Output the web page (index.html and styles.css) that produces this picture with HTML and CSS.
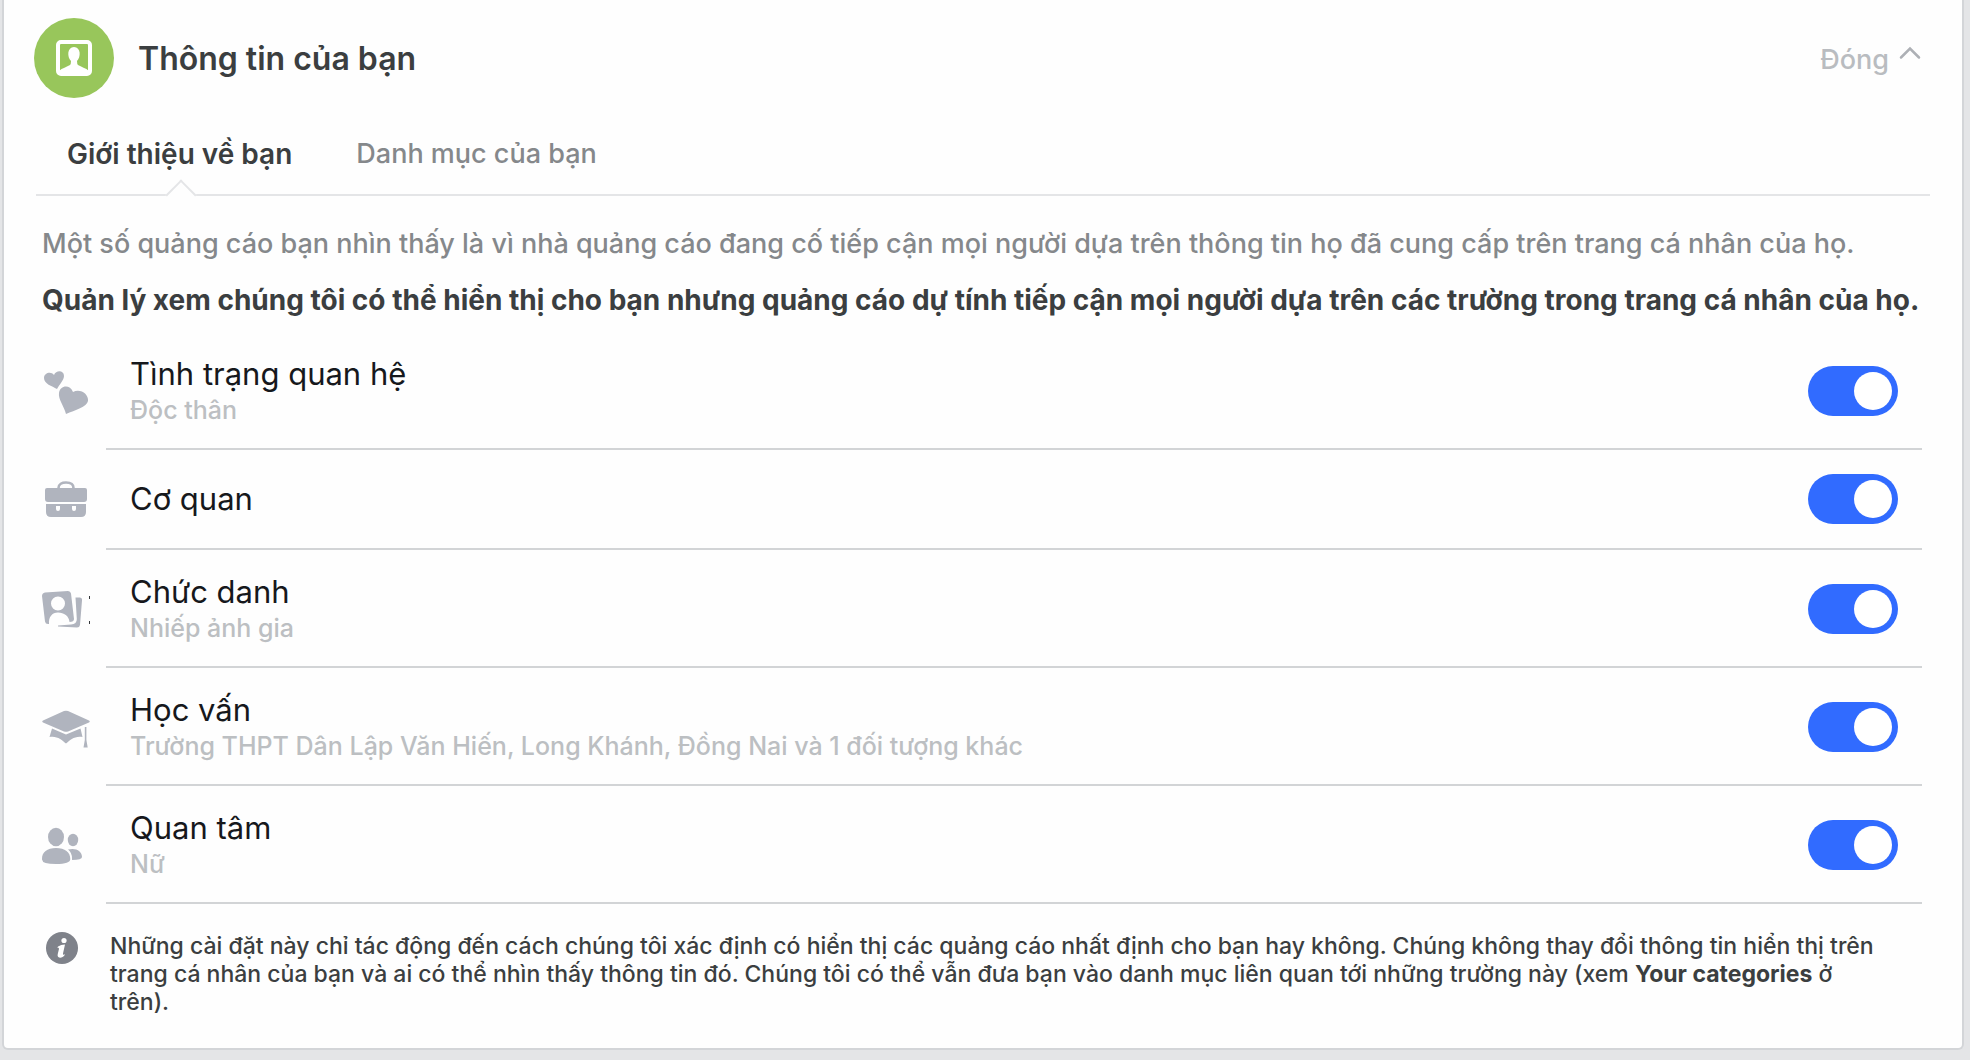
FILE: index.html
```html
<!DOCTYPE html>
<html lang="vi">
<head>
<meta charset="utf-8">
<meta name="viewport" content="width=device-width, initial-scale=1">
<title>Thông tin của bạn</title>
<link rel="stylesheet" href="styles.css">
</head>
<body>
<main class="card">
  <header class="card-header">
    <svg class="badge" viewBox="0 0 80 80" aria-hidden="true">
      <circle cx="40" cy="40" r="40" fill="#98c65b"/>
      <rect x="24" y="24" width="32" height="32" rx="3" fill="none" stroke="#fff" stroke-width="4"/>
      <path fill="#fff" d="M25 56V53C28 50 33 49 36 47Q37 46 37 43C33 39 33 29 40 29C47 29 47 39 43 43Q43 46 44 47C47 49 52 50 55 53V56z"/>
    </svg>
    <h1 class="card-title">Thông tin của bạn</h1>
    <button class="close" type="button">Đóng
      <svg class="chevron" viewBox="0 0 22 14" aria-hidden="true"><path d="M2 11.500L11 2.500L20 11.500" fill="none" stroke="#adb0b5" stroke-width="2.500" stroke-linecap="round"/></svg>
    </button>
  </header>
  <nav class="tabs">
    <a class="tab tab-active" href="#about" aria-current="page">Giới thiệu về bạn</a>
    <a class="tab" href="#categories">Danh mục của bạn</a>
  </nav>
  <section class="content" id="about">
    <p class="intro">Một số quảng cáo bạn nhìn thấy là vì nhà quảng cáo đang cố tiếp cận mọi người dựa trên thông tin họ đã cung cấp trên trang cá nhân của họ.</p>
    <p class="intro intro-strong">Quản lý xem chúng tôi có thể hiển thị cho bạn nhưng quảng cáo dự tính tiếp cận mọi người dựa trên các trường trong trang cá nhân của họ.</p>
    <ul class="settings">
      <li class="setting">
        <svg class="icon" viewBox="0 0 48 48" aria-hidden="true"><g fill="#b0b4be"><path d="M15 22C10 19 2 17 2 11C2 6 9 4 12 8C14 3 22 3 22 9C22 13 17 18 15 22z"/><path d="M24 47C22 39 16 32 17 26C18 18 28 17 31 25C38 21 47 27 46 34C45 40 33 43 24 47z"/></g></svg>
        <label class="setting-body" for="relationship">
          <span class="setting-text"><span class="setting-name">Tình trạng quan hệ</span><span class="setting-value">Độc thân</span></span>
          <input class="switch" type="checkbox" id="relationship" checked>
        </label>
      </li>
      <li class="setting setting-single">
        <svg class="icon" viewBox="0 0 48 48" aria-hidden="true"><path d="M16.500 12C16.500 8 20 6.500 24 6.500S31.500 8 31.500 12" fill="none" stroke="#b0b4be" stroke-width="2.600"/><path fill="#b0b4be" fill-rule="evenodd" d="M5 12h38q2 0 2 2v9q0 3-3 3H6q-3 0-3-3v-9q0-2 2-2zM4 28h40v8q0 5-5 5H9q-5 0-5-5zM14 30v3q0 2 2 2t2-2v-3zM30 30v3q0 2 2 2t2-2v-3z"/></svg>
        <label class="setting-body" for="workplace">
          <span class="setting-text"><span class="setting-name">Cơ quan</span></span>
          <input class="switch" type="checkbox" id="workplace" checked>
        </label>
      </li>
      <li class="setting">
        <svg class="icon" viewBox="0 0 48 48" aria-hidden="true"><path fill="#b0b4be" fill-rule="evenodd" d="M3 7.500L26 6Q28.500 6 29 8.500L32 34Q32 37 27.500 37C27 31 22 27.500 16 27.500C10 27.500 6.500 32 7 39Q3.500 39.500 3 36.500L0 11Q0 8 3 7.500zM16 11.500a7 7 0 1 0 0 14a7 7 0 0 0 0-14z"/><path fill="#b0b4be" d="M33.500 12.500L38 12.500Q40.500 13 40 15.500L38 40Q37.500 42.500 35 42.500L16 41.500V40.500L29 39.500Q35 39 34.800 34z"/><path fill="#34373b" d="M47 11h1v3h-1zM47 36h1v3h-1z"/></svg>
        <label class="setting-body" for="job">
          <span class="setting-text"><span class="setting-name">Chức danh</span><span class="setting-value">Nhiếp ảnh gia</span></span>
          <input class="switch" type="checkbox" id="job" checked>
        </label>
      </li>
      <li class="setting">
        <svg class="icon" viewBox="0 0 48 48" aria-hidden="true"><path fill="#b0b4be" d="M1 17.500L22 8Q24 7.500 26 8L47 17.500Q48.500 18.500 47 19.500L26 28.500Q24 29.200 22 28.500L1 19.500Q-.5 18.500 1 17.500zM10 25.500L24 31.500L38.500 25.500L40.500 34C33 32.500 28 37 24 40.500C20 37 15 32.500 7.500 34zM42.800 24h1.600v13l1.300 7.500h-4.200L42.800 37z"/></svg>
        <label class="setting-body" for="education">
          <span class="setting-text"><span class="setting-name">Học vấn</span><span class="setting-value">Trường THPT Dân Lập Văn Hiến, Long Khánh, Đồng Nai và 1 đối tượng khác</span></span>
          <input class="switch" type="checkbox" id="education" checked>
        </label>
      </li>
      <li class="setting">
        <svg class="icon" viewBox="0 0 48 48" aria-hidden="true"><g fill="#b0b4be"><ellipse cx="14" cy="16" rx="8" ry="9.300"/><ellipse cx="31" cy="19" rx="5.200" ry="6.200"/><path d="M0 38C0 31 5 27 14 27S28.300 31 28.300 38Q28.300 43 14 43T0 38zM26 28.500C34 26.500 40 30 40 36Q40 39 30 39Q30.500 32 26 28.500z"/></g></svg>
        <label class="setting-body" for="interested">
          <span class="setting-text"><span class="setting-name">Quan tâm</span><span class="setting-value">Nữ</span></span>
          <input class="switch" type="checkbox" id="interested" checked>
        </label>
      </li>
    </ul>
    <div class="note">
      <svg class="note-icon" viewBox="0 0 32 32" aria-hidden="true"><circle cx="16" cy="16" r="16" fill="#7f828a"/><circle cx="18" cy="8.500" r="2.600" fill="#fff"/><path fill="#fff" d="M12 14.500q3-2 7-2l-2 9q-.5 2 2 .8q-1 3-4.500 3.400q-3.500 0-2.800-3.400l1.200-5q.4-2-1.500-1.300z"/></svg>
      <p class="note-text">Những cài đặt này chỉ tác động đến cách chúng tôi xác định có hiển thị các quảng cáo nhất định cho bạn hay không. Chúng không thay đổi thông tin hiển thị trên trang cá nhân của bạn và ai có thể nhìn thấy thông tin đó. Chúng tôi có thể vẫn đưa bạn vào danh mục liên quan tới những trường này (xem <strong>Your categories</strong> ở trên).</p>
    </div>
  </section>
</main>
</body>
</html>
```
FILE: styles.css
```css
* {
  box-sizing: border-box;
}

body {
  margin: 0;
  padding: 0 6px 10px 2px;
  background: #e4e5e7;
  color: #3b3e40;
  font-family: Inter, "Liberation Sans", sans-serif;
}

h1,
p,
ul {
  margin: 0;
  padding: 0;
}

.card {
  padding: 18px 32px 32px;
  background: #fefefe;
  border: 2px solid #d3d5d8;
  border-top: 0;
  border-radius: 0 0 6px 6px;
}

.card-header {
  display: flex;
  align-items: center;
  gap: 24px;
  padding: 0 9px 0 0;
}

.badge {
  width: 80px;
  height: 80px;
  margin-left: -2px;
}

.card-title {
  flex: 1;
  font-size: 32px;
  font-weight: 600;
}

.close {
  display: flex;
  align-items: center;
  gap: 10px;
  padding: 4px 0 0;
  border: 0;
  background: none;
  color: #b9bcc0;
  font: 500 27px/36px Inter, "Liberation Sans", sans-serif;
  cursor: pointer;
}

.chevron {
  width: 22px;
  height: 14px;
  margin-bottom: 14px;
}

.tabs {
  display: flex;
  gap: 64px;
  padding: 0 31px;
  border-bottom: 2px solid #e4e5e7;
}

.tab {
  position: relative;
  padding: 38px 0 22px;
  color: #85888b;
  font-size: 27px;
  font-weight: 500;
  line-height: 36px;
  text-decoration: none;
}

.tab-active {
  color: #3b3e40;
  font-size: 28px;
  font-weight: 600;
}

.tab-active::after {
  content: "";
  position: absolute;
  bottom: -12px;
  left: calc(50% - 10px);
  width: 20px;
  height: 20px;
  border: solid #e4e5e7;
  border-width: 2px 0 0 2px;
  background: #fefefe;
  transform: rotate(45deg);
}

.content {
  padding: 28px 4px 0 6px;
}

.intro {
  margin-bottom: 16px;
  color: #85888b;
  font-size: 27px;
  font-weight: 500;
  line-height: 40px;
}

.intro-strong {
  margin-bottom: 12px;
  color: #3b3e40;
  font-size: 28px;
  font-weight: 700;
}

.settings {
  padding-right: 4px;
  list-style: none;
}

.setting {
  display: flex;
  align-items: center;
  gap: 16px;
}

.icon {
  flex: none;
  width: 48px;
  height: 48px;
}

.setting-body {
  flex: 1;
  display: flex;
  align-items: center;
  justify-content: space-between;
  min-height: 118px;
  padding: 2px 24px 0;
  border-bottom: 2px solid #d2d4d6;
}

.setting-single .setting-body {
  min-height: 100px;
  padding-top: 0;
}

.setting-text {
  display: flex;
  flex-direction: column;
}

.setting-name {
  color: #16181c;
  font-size: 31px;
  line-height: 38px;
}

.setting-value {
  color: #bcbfc2;
  font-size: 25px;
  font-weight: 500;
  line-height: 34px;
}

.switch {
  appearance: none;
  flex: none;
  width: 90px;
  height: 50px;
  margin: 0;
  padding: 6px;
  border-radius: 25px;
  background: #bcc0c4;
  cursor: pointer;
}

.switch::before {
  content: "";
  display: block;
  width: 38px;
  height: 38px;
  border-radius: 50%;
  background: #fff;
}

.switch:checked {
  background: #316bff;
}

.switch:checked::before {
  margin-left: auto;
}

.note {
  display: flex;
  gap: 32px;
  padding: 28px 40px 0 4px;
}

.note-icon {
  flex: none;
  width: 32px;
  height: 32px;
}

.note-text {
  font-size: 23px;
  font-weight: 500;
  line-height: 28px;
}

.note-text strong {
  font-weight: 700;
}
```
